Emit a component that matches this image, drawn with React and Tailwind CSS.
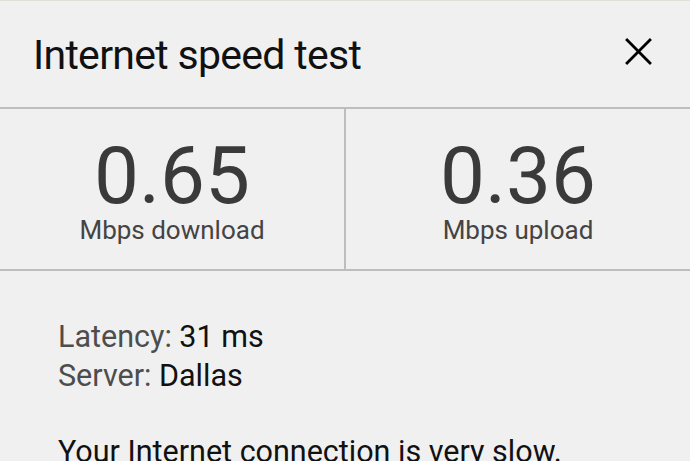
export default function App() {
    return (
        <div className="w-[690px] h-[461px] overflow-hidden bg-[#f0f0f0] font-['Roboto',sans-serif]">
            <div className="h-px bg-[#dfe1d9]" />

            {/* header */}
            <div className="flex items-start justify-between pt-[30px] pl-[33px] pr-[38px] h-[106px]">
                <h1 className="text-[41px] leading-[48px] tracking-[-0.7px] text-[#111]">
                    Internet speed test
                </h1>
                <button className="mt-[7px] w-[27px] h-[27px] text-black">
                    <svg viewBox="0 0 26 26" width="27" height="27" fill="none" stroke="currentColor" strokeWidth="2.7" strokeLinecap="square">
                        <line x1="2" y1="2" x2="24" y2="24" />
                        <line x1="24" y1="2" x2="2" y2="24" />
                    </svg>
                </button>
            </div>

            {/* speeds */}
            <div className="flex h-[164px] border-y-2 border-[#bdbdbd]">
                <div className="w-[346px] flex flex-col items-center pt-[27px] border-r-2 border-[#bdbdbd]">
                    <div className="text-[80px] leading-[80px] text-[#3a3a3a]">0.65</div>
                    <div className="mt-px text-[26px] leading-[26px] text-[#444]">Mbps download</div>
                </div>
                <div className="flex-1 flex flex-col items-center pt-[27px]">
                    <div className="text-[80px] leading-[80px] text-[#3a3a3a]">0.36</div>
                    <div className="mt-px text-[26px] leading-[26px] text-[#444]">Mbps upload</div>
                </div>
            </div>

            {/* details */}
            <div className="pl-[58px] pt-[46px] text-[30.5px] leading-[39px] text-[#111]">
                <p><span className="text-[#4d4d4d]">Latency:</span> 31 ms</p>
                <p><span className="text-[#4d4d4d]">Server:</span> Dallas</p>
                <p className="mt-[37px] whitespace-nowrap">Your Internet connection is very slow.</p>
            </div>
        </div>
    );
}
